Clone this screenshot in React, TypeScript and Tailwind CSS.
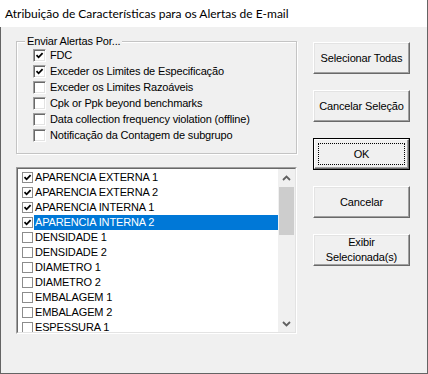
import React from "react";

const groupItems = [
  { label: "FDC", checked: true },
  { label: "Exceder os Limites de Especificação", checked: true },
  { label: "Exceder os Limites Razoáveis", checked: false },
  { label: "Cpk or Ppk beyond benchmarks", checked: false },
  { label: "Data collection frequency violation (offline)", checked: false },
  { label: "Notificação da Contagem de subgrupo", checked: false },
];

const listItems = [
  { label: "APARENCIA EXTERNA 1", checked: true },
  { label: "APARENCIA EXTERNA 2", checked: true },
  { label: "APARENCIA INTERNA 1", checked: true },
  { label: "APARENCIA INTERNA 2", checked: true, selected: true },
  { label: "DENSIDADE 1", checked: false },
  { label: "DENSIDADE 2", checked: false },
  { label: "DIAMETRO 1", checked: false },
  { label: "DIAMETRO 2", checked: false },
  { label: "EMBALAGEM 1", checked: false },
  { label: "EMBALAGEM 2", checked: false },
  { label: "ESPESSURA 1", checked: false },
];

function Tick({ size }: { size: number }) {
  return (
    <svg width={size} height={size} viewBox="0 0 9 9">
      <path d="M1.5 4.2 L3.6 6.3 L7.6 2.2" fill="none" stroke="#000" strokeWidth="1.8" />
    </svg>
  );
}

function GroupCheck({ checked }: { checked: boolean }) {
  return (
    <span className="flex h-[13px] w-[13px] shrink-0 items-center justify-center border border-t-[#a0a0a0] border-l-[#a0a0a0] border-b-white border-r-white bg-white shadow-[inset_1px_1px_0_#696969,inset_-1px_-1px_0_#e3e3e3]">
      {checked ? <Tick size={9} /> : null}
    </span>
  );
}

function ListCheck({ checked }: { checked: boolean }) {
  return (
    <span className="flex h-[11px] w-[11px] shrink-0 items-center justify-center border border-[#8c8c8c] bg-white">
      {checked ? <Tick size={9} /> : null}
    </span>
  );
}

function Button({ children, isDefault }: { children: React.ReactNode; isDefault?: boolean }) {
  if (isDefault) {
    return (
      <div className="h-[32px] w-[97px] border border-black">
        <div className="flex h-full w-full items-center justify-center border border-t-white border-l-white border-b-[#696969] border-r-[#696969] bg-[#f0f0f0] shadow-[inset_-1px_-1px_0_#a0a0a0]">
          <div className="flex h-[22px] w-[87px] items-center justify-center border border-dotted border-black">
            {children}
          </div>
        </div>
      </div>
    );
  }
  return (
    <div className="flex h-[32px] w-[97px] items-center justify-center border border-t-white border-l-white border-b-[#696969] border-r-[#696969] bg-[#f0f0f0] text-center leading-[15px] shadow-[inset_-1px_-1px_0_#a0a0a0,inset_1px_1px_0_#e3e3e3]">
      {children}
    </div>
  );
}

function Chevron({ up }: { up?: boolean }) {
  return (
    <svg width="9" height="6" viewBox="0 0 9 6">
      <path d={up ? "M1 5 L4.5 1.5 L8 5" : "M1 1 L4.5 4.5 L8 1"} fill="none" stroke="#606060" strokeWidth="1.8" />
    </svg>
  );
}

export default function App() {
  return (
    <div
      className="flex h-[374px] w-[428px] flex-col bg-white text-[11px] tracking-[-0.15px] text-black"
      style={{ fontFamily: '"Liberation Sans", Arial, sans-serif' }}
    >
      <div
        className="flex h-[27px] shrink-0 items-center border-r border-[#646464] pl-[5px] text-[12px] tracking-normal"
        style={{ fontFamily: 'Lato, "Noto Sans", sans-serif' }}
      >
        Atribuição de Características para os Alertas de E-mail
      </div>
      <div className="flex flex-1 gap-[16px] border-b border-l border-r border-[#646464] bg-[#f0f0f0] pl-[15px]">
        <div className="flex w-[281px] flex-col pt-[14px]">
          <div className="relative h-[113px] border border-[#c4c4c4] pl-[16px] pt-[5px] shadow-[inset_1px_1px_0_#fff,1px_1px_0_#fff]">
            <span className="absolute -top-[8px] left-[8px] bg-[#f0f0f0] px-[2px] leading-[14px]">
              Enviar Alertas Por...
            </span>
            {groupItems.map((item) => (
              <div key={item.label} className="flex h-[16px] items-center gap-[4px]">
                <GroupCheck checked={item.checked} />
                <span className="whitespace-nowrap">{item.label}</span>
              </div>
            ))}
          </div>
          <div className="mt-[13px] h-[167px] border border-t-[#a0a0a0] border-l-[#a0a0a0] border-b-white border-r-white">
            <div className="flex h-full border border-t-[#696969] border-l-[#696969] border-b-[#e3e3e3] border-r-[#e3e3e3] bg-white">
              <div className="flex-1 overflow-hidden pl-[4px] pt-[1px]">
                {listItems.map((item) => (
                  <div key={item.label} className="flex h-[15px] items-center">
                    <ListCheck checked={item.checked} />
                    <span
                      className={
                        item.selected
                          ? "ml-[1px] flex h-[15px] flex-1 items-center bg-[#0078d7] pl-[1px] text-white"
                          : "ml-[1px] flex h-[15px] flex-1 items-center pl-[1px]"
                      }
                    >
                      {item.label}
                    </span>
                  </div>
                ))}
              </div>
              <div className="flex w-[17px] shrink-0 flex-col bg-[#f0f0f0]">
                <div className="flex h-[17px] items-center justify-center">
                  <Chevron up />
                </div>
                <div className="mx-[1px] mt-[1px] h-[48px] bg-[#cdcdcd]" />
                <div className="flex-1" />
                <div className="flex h-[17px] items-center justify-center">
                  <Chevron />
                </div>
              </div>
            </div>
          </div>
        </div>
        <div className="flex flex-col gap-[16px] pt-[15px]">
          <Button>Selecionar Todas</Button>
          <Button>Cancelar Seleção</Button>
          <Button isDefault>OK</Button>
          <Button>Cancelar</Button>
          <Button>
            Exibir
            <br />
            Selecionada(s)
          </Button>
        </div>
      </div>
    </div>
  );
}
